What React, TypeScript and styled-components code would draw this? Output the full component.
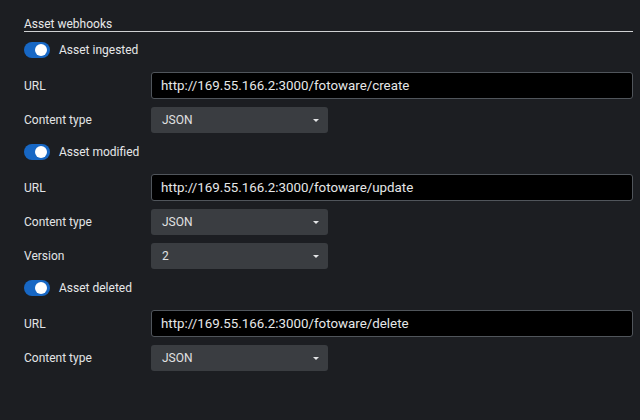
import React, { useState } from "react";
import styled, { createGlobalStyle } from "styled-components";

const GlobalStyle = createGlobalStyle`
  html, body {
    margin: 0;
    padding: 0;
    background: #1c1e22;
  }
  body {
    font-family: Roboto, "Liberation Sans", sans-serif;
    color: #e2e4e6;
  }
`;

const Page = styled.div`
  width: 640px;
  height: 420px;
  box-sizing: border-box;
  padding: 17px 7px 0 24px;
  background: #1c1e22;
`;

const SectionTitle = styled.div`
  font-size: 12px;
  line-height: 14px;
  color: #e8e9ea;
  border-bottom: 1px solid #cfd1d3;
  margin-bottom: 10px;
`;

const Groups = styled.div`
  display: flex;
  flex-direction: column;
  gap: 11px;
`;

const Group = styled.div`
  display: flex;
  flex-direction: column;
  gap: 8px;
`;

const ToggleRow = styled.label`
  display: flex;
  align-items: center;
  gap: 9px;
  height: 16px;
  margin-bottom: 6px;
  font-size: 12px;
  color: #e6e7e9;
  cursor: pointer;
`;

const Track = styled.span<{ $on: boolean }>`
  position: relative;
  width: 26px;
  height: 16px;
  border-radius: 8px;
  background: ${(p) => (p.$on ? "#1767c4" : "#4a4e53")};
  flex-shrink: 0;
`;

const Knob = styled.span<{ $on: boolean }>`
  position: absolute;
  top: 2px;
  left: ${(p) => (p.$on ? "11px" : "3px")};
  width: 12px;
  height: 12px;
  border-radius: 50%;
  background: #ffffff;
`;

const FieldRow = styled.div`
  display: grid;
  grid-template-columns: 127px 1fr;
  align-items: center;
  font-size: 12px;
  color: #e2e4e6;
`;

const TextInput = styled.input`
  box-sizing: border-box;
  height: 27px;
  width: 100%;
  background: #000;
  border: 1px solid #50555b;
  border-radius: 3px;
  color: #e6e7e8;
  font-family: Roboto, "Liberation Sans", sans-serif;
  font-size: 13.333px;
  padding: 0 9px;
  outline: none;
`;

const Select = styled.div`
  box-sizing: border-box;
  width: 177px;
  height: 26px;
  background: #3a3d41;
  border-radius: 3px;
  display: flex;
  align-items: center;
  justify-content: space-between;
  padding: 0 9px 0 11px;
  font-size: 12px;
  color: #e0e1e3;
`;

const Caret = styled.span`
  width: 0;
  height: 0;
  border-left: 3px solid transparent;
  border-right: 3px solid transparent;
  border-top: 3px solid #e4e5e7;
`;

type Hook = {
  label: string;
  url: string;
  version?: string;
};

const hooks: Hook[] = [
  { label: "Asset ingested", url: "http://169.55.166.2:3000/fotoware/create" },
  { label: "Asset modified", url: "http://169.55.166.2:3000/fotoware/update", version: "2" },
  { label: "Asset deleted", url: "http://169.55.166.2:3000/fotoware/delete" },
];

const Toggle = ({ label }: { label: string }) => {
  const [on, setOn] = useState(true);
  return (
    <ToggleRow onClick={() => setOn(!on)}>
      <Track $on={on}>
        <Knob $on={on} />
      </Track>
      {label}
    </ToggleRow>
  );
};

const Dropdown = ({ value }: { value: string }) => (
  <Select>
    {value}
    <Caret />
  </Select>
);

export default function App() {
  return (
    <Page>
      <GlobalStyle />
      <SectionTitle>Asset webhooks</SectionTitle>
      <Groups>
        {hooks.map((h) => (
          <Group key={h.label}>
            <Toggle label={h.label} />
            <FieldRow>
              <span>URL</span>
              <TextInput defaultValue={h.url} />
            </FieldRow>
            <FieldRow>
              <span>Content type</span>
              <Dropdown value="JSON" />
            </FieldRow>
            {h.version && (
              <FieldRow>
                <span>Version</span>
                <Dropdown value={h.version} />
              </FieldRow>
            )}
          </Group>
        ))}
      </Groups>
    </Page>
  );
}
